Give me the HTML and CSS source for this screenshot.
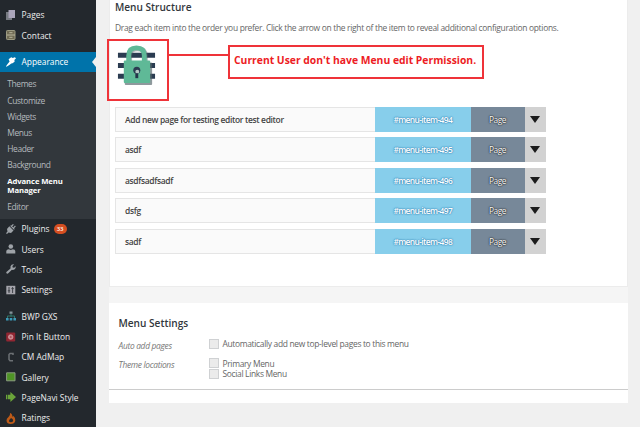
FILE: index.html
```html
<!DOCTYPE html>
<html lang="en">
<head>
<meta charset="utf-8">
<title>Menus</title>
<link rel="stylesheet" href="styles.css">
</head>
<body>
<div class="layout">
  <nav class="sidebar">
    <a class="item"><svg class="icon" viewBox="0 0 10 10"><path fill="#777b82" d="M0 2h6v8H0z"/><path fill="#aaa5b9" d="M2.5 0H9v8H2.5z"/></svg>Pages</a>
    <a class="item"><svg class="icon" viewBox="0 0 10 10"><rect x=".5" y=".5" width="8.5" height="9" rx=".8" fill="#706b54" stroke="#9b9a82"/><path stroke="#b9b79d" d="M1 5h8M3.3 2.7h3.2M3.3 7.3h3.2"/></svg>Contact</a>
    <a class="item current"><svg class="icon" viewBox="0 0 10 10"><path fill="#fff" d="M2.600 2.200 5.200.2 6.800 1l2-.8 1.200 1-1.600 1.700.2 1.800L6.500 6.300 5.300 6.400 3.300 8 .5 9.800 0 9.300 1.800 6.700 3.600 4.600z"/></svg>Appearance</a>
    <div class="submenu">
      <a>Themes</a><a>Customize</a><a>Widgets</a><a>Menus</a><a>Header</a><a>Background</a>
      <a class="selected">Advance Menu<br>Manager</a><a>Editor</a>
    </div>
    <a class="item"><svg class="icon" viewBox="0 0 10 10"><path fill="#9ea3a8" d="M0 9.2 1.5 7.5 1 5l2.3-2.8L7.5 6.5 5 9 2.5 8.5 1 10zM4 1.8l4 4 .8-.8L8 4.2l1.8-1.8L9 1.6 7.2 3.4 6.2 2.4 7.8.8 7 0 5.3 1.6z"/></svg>Plugins<span class="badge">33</span></a>
    <a class="item"><svg class="icon" viewBox="0 0 10 10"><circle cx="4.8" cy="2.5" r="2.3" fill="#9ea3a8"/><path fill="#9ea3a8" d="M.3 9.5V7q.2-1.6 2.5-1.8L4.8 6l2-.8Q9.200 5.400 9.300 7v2.500z"/></svg>Users</a>
    <a class="item"><svg class="icon" viewBox="0 0 10 10"><path fill="#9ea3a8" d="M.4 8 4.500 4.500Q4 2 5.600.8 7 0 8 .4L6.400 2l.3 1.400 1.500.3L9.700 2.200Q10 4 8.700 5.200 7.500 6.200 5.900 5.800L2 9.600Q1 10 .5 9.300 0 8.700.4 8z"/></svg>Tools</a>
    <a class="item"><svg class="icon" viewBox="0 0 10 10"><path fill="#a5a5ac" d="M.3.800h9v8.500h-9z"/><path stroke="#3e4248" d="M3 2v6M6.600 2v6M1.800 5.800h2.400M5.400 3.600h2.400"/></svg>Settings</a>
    <div class="gap"></div>
    <a class="item"><svg class="icon" viewBox="0 0 10 10"><path fill="#85939a" d="M3.500.5h3v2.300h-3z"/><path fill="none" stroke="#32786b" d="M5 2.800v3M1.500 7V5h7v2"/><path fill="#3d9ab8" d="M0 7h2.600v2.600H0zM3.700 7h2.600v2.600H3.700zM7.400 7H10v2.600H7.400z"/></svg>BWP GXS</a>
    <a class="item"><svg class="icon" viewBox="0 0 10 10"><rect x=".2" y=".5" width="9" height="9" rx="1" fill="#912632"/><circle cx="4.700" cy="5" r="2.300" fill="#c98289" stroke="#d5a2a6" stroke-width=".7"/><path d="M4 5h1.500" stroke="#912632"/></svg>Pin It Button</a>
    <a class="item"><svg class="icon" viewBox="0 0 10 10"><path fill="none" stroke="#6c7074" stroke-width="1.500" d="M7 3V1.500H4L3 2.500v5l1 1.200h3"/></svg>CM AdMap</a>
    <a class="item"><svg class="icon" viewBox="0 0 10 10"><path fill="#4f9426" stroke="#8a9a80" d="M.6.800h8.400v8H.6z"/></svg>Gallery</a>
    <a class="item"><svg class="icon" viewBox="0 0 10 10"><path fill="#6ba43a" d="M0 2.800h1v4.400H0zM1.600 2.800h2.800V0L10 5l-5.600 5V7.200H1.600z"/></svg>PageNavi Style</a>
    <a class="item"><svg class="icon" viewBox="0 0 10 10"><path fill="#bd5a18" d="M4 0q2.700 1 2.300 3.700L7.500 3Q9.800 5 9.300 7.800 8.500 11 4.800 11 1 11 .5 7.800.3 5.500 2.500 4 4.500 2.500 4 0z"/><path fill="#23282d" d="M5 5q2.800 1.400 1.900 3.400Q5 10 3 8.500 2.500 7 5 5z"/></svg>Ratings</a>
  </nav>
  <main class="content">
    <section class="card structure">
      <h3>Menu Structure</h3>
      <p class="hint">Drag each item into the order you prefer. Click the arrow on the right of the item to reveal additional configuration options.</p>
      <div class="notice">
        <div class="lockbox">
          <svg class="lock" viewBox="0 0 42 44"><path stroke="#2b3c51" stroke-width="5" d="M2 12.500h38M2 23h38M2 34h38"/><path fill="none" stroke="#5e6a70" stroke-opacity=".5" stroke-width="5" d="M14 19v-6q0-7 8-7t8 7v6"/><rect x="9" y="20" width="28" height="23" rx="1" fill="#536269" opacity=".65"/><path fill="none" stroke="#5fb997" stroke-width="5" d="M13 20v-7Q13 5 21 5t8 8v7"/><rect x="8" y="18" width="27" height="23" rx="1" fill="#5fb997"/><circle cx="21.300" cy="28" r="3.600" fill="#2b3c51"/><circle cx="21.800" cy="29.300" r="2" fill="#b4c7c4"/><path fill="#243349" d="M19.800 31h3v5h-3z"/></svg>
        </div>
        <div class="connector"></div>
        <div class="message">Current User don't have Menu edit Permission.</div>
      </div>
      <div class="rows">
        <div class="row"><b>Add new page for testing editor test editor</b><span class="id">#menu-item-494</span><span class="type">Page</span><span class="toggle"><i></i></span></div>
        <div class="row"><b>asdf</b><span class="id">#menu-item-495</span><span class="type">Page</span><span class="toggle"><i></i></span></div>
        <div class="row"><b>asdfsadfsadf</b><span class="id">#menu-item-496</span><span class="type">Page</span><span class="toggle"><i></i></span></div>
        <div class="row"><b>dsfg</b><span class="id">#menu-item-497</span><span class="type">Page</span><span class="toggle"><i></i></span></div>
        <div class="row"><b>sadf</b><span class="id">#menu-item-498</span><span class="type">Page</span><span class="toggle"><i></i></span></div>
      </div>
    </section>
    <section class="card settings">
      <h3>Menu Settings</h3>
      <div class="setting"><em>Auto add pages</em><div><label><span class="box"></span>Automatically add new top-level pages to this menu</label></div></div>
      <div class="setting locations"><em>Theme locations</em><div><label><span class="box"></span>Primary Menu</label><label><span class="box"></span>Social Links Menu</label></div></div>
    </section>
    <div class="footer"></div>
  </main>
</div>
</body>
</html>
```
FILE: styles.css
```css
* { box-sizing: border-box; }
body { margin: 0; background: #f0f0f0; font-family: "Open Sans", sans-serif; font-size: 8.450px; color: #666; overflow: hidden; }
.layout { display: flex; height: 427px; overflow: hidden; }
.sidebar { width: 95.500px; flex: none; background: #23282d; padding-top: 4.700px; color: #eee; }
.item { display: flex; align-items: center; height: 20.250px; padding-left: 6px; font-size: 8.400px; white-space: nowrap; position: relative; }
.icon { width: 10px; height: 10px; margin-right: 5.500px; flex: none; overflow: visible; }
.current { background: #0073aa; color: #fff; margin-top: 6.500px; }
.current::after { content: ""; position: absolute; right: 0; top: 5.500px; border: 5px solid transparent; border-left: 0; border-right: 4.500px solid #f0f0f0; }
.submenu { background: #32373c; height: 147px; padding: 4.500px 0 0 7.300px; color: #b4b9be; font-size: 8.450px; letter-spacing: -.4px; margin-bottom: -.3px; }
.submenu a { display: block; line-height: 16.200px; }
.submenu .selected { line-height: 9px; padding: 3.500px 0; color: #fff; font-weight: 700; font-size: 7.700px; letter-spacing: -.1px; }
.badge { background: #d54e21; color: #fff; font-size: 6px; font-weight: 600; border-radius: 5px; width: 13px; height: 10px; line-height: 10px; text-align: center; margin-left: 4px; }
.gap { height: 6.700px; }
.content { flex: 1; padding: 0 12.500px 0 13px; }
.card { background: #fff; }
h3 { margin: 0; font-size: 10.100px; line-height: 14px; font-weight: 600; color: #32373c; }
.structure { height: 286.500px; border: 1px solid #ececec; border-top: 0; padding-left: 5.500px; }
.hint { margin: 6.500px 0 0; line-height: 14px; white-space: nowrap; letter-spacing: -.31px; }
.notice { display: flex; margin: 4px 0 0 -8.500px; height: 62px; }
.lockbox { width: 62px; height: 62px; border: 2px solid #ef3339; flex: none; padding: 2px 0 0 7px; }
.lock { width: 41px; height: 43px; display: block; }
.connector { width: 61px; height: 2px; margin: 15px 0 0 -2px; background: #ef3339; }
.message { border: 2px solid #ef3339; height: 34px; width: 256px; margin-top: 6.500px; padding: 5px 0 0 4.500px; line-height: 16px; color: #ed1c24; font-weight: 700; font-size: 10.350px; white-space: nowrap; }
.rows { display: grid; gap: 5.450px; margin-top: 6.500px; width: 431px; }
.row { display: flex; height: 25px; line-height: 26px; }
.row b { flex: 1; font-weight: 600; color: #444; background: #fafafa; border: 1px solid #e5e5e5; border-right: 0; padding-left: 9px; line-height: 24px; font-size: 8.450px; letter-spacing: -.33px; }
.id, .type { text-align: center; color: #fff; font-size: 8.400px; letter-spacing: -.45px; }
.id { width: 95.500px; background: #87ceeb; font-weight: 600; letter-spacing: -.6px; text-shadow: 0 0 1px #3588b8, 0 0 2px #1668a0; }
.type { width: 54px; background: #778899; text-shadow: 0 0 1px #111, 0 0 2px #111; }
.toggle { width: 21.500px; background: #d2d2d2; display: grid; place-items: center; }
.toggle i { border: 5px solid transparent; border-top: 7px solid #1b1b1b; border-bottom: 0; }
.settings { height: 87.500px; margin-top: 16px; padding: 13.500px 0 0 10px; border-bottom: 1px solid #ccc; box-shadow: 0 -16px #f5f5f5; }
.setting { display: flex; margin-top: 9px; }
.setting em { width: 90px; line-height: 14px; font-size: 8.400px; letter-spacing: -.3px; color: #777; }
.setting label { display: flex; align-items: center; height: 10.700px; letter-spacing: -.33px; }
.setting div { margin-top: -.5px; }
.box { width: 10px; height: 10px; border: 1px solid #cfd1d3; background: #ebebeb; margin-right: 4px; }
.locations { margin-top: 4.500px; }
.locations div { margin-top: .3px; }
.footer { height: 12.500px; background: #fff; }
```
